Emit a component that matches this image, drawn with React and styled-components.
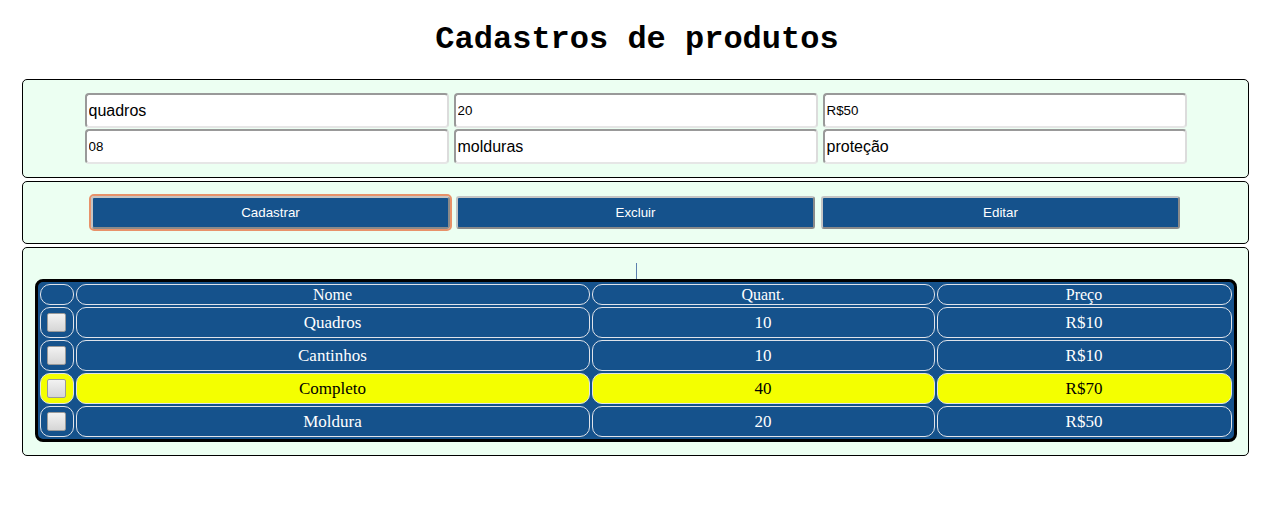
import React from "react";
import styled, { createGlobalStyle } from "styled-components";

const GlobalStyle = createGlobalStyle`
  * {
    box-sizing: border-box;
  }
  body {
    margin: 0 8px;
    background: #ffffff;
    font-family: "Liberation Serif", serif;
  }
`;

const produtos = [
  { nome: "Quadros", quant: 10, preco: "R$10" },
  { nome: "Cantinhos", quant: 10, preco: "R$10" },
  { nome: "Completo", quant: 40, preco: "R$70", selected: true },
  { nome: "Moldura", quant: 20, preco: "R$50" },
];

const campos = [
  { value: "quadros", big: true },
  { value: "20" },
  { value: "R$50" },
  { value: "08" },
  { value: "molduras", big: true },
  { value: "proteção", big: true },
];

export default function App() {
  return (
    <>
      <GlobalStyle />
      <Title>Cadastros de produtos</Title>

      <Panel $pad="13px 0">
        <InputGrid>
          {campos.map((c, i) => (
            <Field key={i} defaultValue={c.value} $big={c.big} />
          ))}
        </InputGrid>
      </Panel>

      <Panel $pad="14px 0">
        <ButtonRow>
          <Button $focused>Cadastrar</Button>
          <Button>Excluir</Button>
          <Button>Editar</Button>
        </ButtonRow>
      </Panel>

      <Panel $pad="15px 0 13px">
        <Caret />
        <Table>
          <colgroup>
            <col style={{ width: "34px" }} />
            <col style={{ width: "514px" }} />
            <col style={{ width: "343px" }} />
            <col />
          </colgroup>
          <thead>
            <tr>
              <HeadCell />
              <HeadCell>Nome</HeadCell>
              <HeadCell>Quant.</HeadCell>
              <HeadCell>Preço</HeadCell>
            </tr>
          </thead>
          <tbody>
            {produtos.map((p) => (
              <tr key={p.nome}>
                <Cell $selected={p.selected}>
                  <Check type="checkbox" />
                </Cell>
                <Cell $selected={p.selected}>{p.nome}</Cell>
                <Cell $selected={p.selected}>{p.quant}</Cell>
                <Cell $selected={p.selected}>{p.preco}</Cell>
              </tr>
            ))}
          </tbody>
        </Table>
      </Panel>
    </>
  );
}

const Title = styled.h1`
  font-family: "Liberation Mono", monospace;
  font-size: 32px;
  font-weight: bold;
  text-align: center;
  margin: 0;
  padding: 21px 0 21px;
  color: #000;
`;

const Panel = styled.section`
  margin: 0 17px 3px 14px;
  padding: ${({ $pad }) => $pad};
  background: #ecfff2;
  border: 1px solid #000;
  border-radius: 5px;
`;

const InputGrid = styled.div`
  display: grid;
  grid-template-columns: repeat(3, 364px);
  column-gap: 5px;
  row-gap: 1px;
  justify-content: center;
`;

const Field = styled.input`
  height: 35px;
  width: 100%;
  padding: 1px 2px;
  border: 2px solid;
  border-color: #999 #dcdcdc #e6e6e6 #999;
  border-radius: 4px;
  background: #fff;
  color: #000;
  font-family: "Liberation Sans", Arial, sans-serif;
  font-size: ${({ $big }) => ($big ? "16px" : "13.33px")};
  outline: none;
`;

const ButtonRow = styled.div`
  display: flex;
  justify-content: center;
  gap: 6px;
`;

const Button = styled.button`
  width: 359px;
  height: 33px;
  background: #15528c;
  color: #fff;
  font-family: "Liberation Sans", Arial, sans-serif;
  font-size: 13.33px;
  border: 2px solid;
  border-color: #c4c4c4 #8a8a8a #8a8a8a #c4c4c4;
  border-radius: 3px;
  outline: ${({ $focused }) => ($focused ? "2px solid #e8926a" : "none")};
  cursor: pointer;
`;

const Caret = styled.div`
  width: 1px;
  height: 16px;
  margin: 0 auto;
  background: #5b7fae;
  position: relative;
  left: 1px;
`;

const Table = styled.table`
  width: 1202px;
  margin: 0 auto;
  table-layout: fixed;
  border-collapse: separate;
  border-spacing: 2px;
  background: #15528c;
  border: 3px solid #000;
  border-radius: 8px;
  font-family: "Liberation Serif", serif;
  color: #fff;
`;

const HeadCell = styled.th`
  height: 21px;
  padding: 0;
  font-size: 16px;
  font-weight: normal;
  text-align: center;
  border: 1px solid #dfe3ea;
  border-radius: 10px;
`;

const Cell = styled.td`
  height: 31px;
  padding: 0;
  font-size: 17px;
  text-align: center;
  border: 1px solid #dfe3ea;
  border-radius: 10px;
  background: ${({ $selected }) => ($selected ? "#f4ff00" : "transparent")};
  color: ${({ $selected }) => ($selected ? "#000" : "#fff")};
`;

const Check = styled.input`
  appearance: none;
  display: block;
  width: 19px;
  height: 19px;
  margin: 0 auto;
  border: 1px solid #9a9a9a;
  border-radius: 2px;
  background: linear-gradient(#f2f2f2, #d6d6d6);
`;
